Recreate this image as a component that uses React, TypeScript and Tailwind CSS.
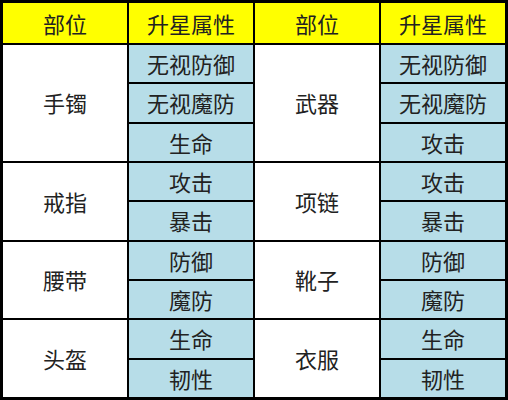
import React from "react";

type Group = { part: string; attrs: string[] };

const left: Group[] = [
  { part: "手镯", attrs: ["无视防御", "无视魔防", "生命"] },
  { part: "戒指", attrs: ["攻击", "暴击"] },
  { part: "腰带", attrs: ["防御", "魔防"] },
  { part: "头盔", attrs: ["生命", "韧性"] },
];

const right: Group[] = [
  { part: "武器", attrs: ["无视防御", "无视魔防", "攻击"] },
  { part: "项链", attrs: ["攻击", "暴击"] },
  { part: "靴子", attrs: ["防御", "魔防"] },
  { part: "衣服", attrs: ["生命", "韧性"] },
];

const spanClass: Record<number, string> = {
  2: "row-span-2",
  3: "row-span-3",
};

const cell = "flex items-center justify-center";

const App = () => {
  return (
    <div
      className="w-[508px] h-[400px] border-[3px] border-black bg-black grid grid-cols-4 grid-rows-[40px_repeat(9,1fr)] gap-[2px] text-[22px] text-[#222]"
      style={{ fontFamily: '"Noto Sans CJK SC", "Noto Sans", sans-serif' }}
    >
      {/* Header */}
      <div className={`${cell} bg-[#ffff00]`}>部位</div>
      <div className={`${cell} bg-[#ffff00]`}>升星属性</div>
      <div className={`${cell} bg-[#ffff00]`}>部位</div>
      <div className={`${cell} bg-[#ffff00]`}>升星属性</div>

      {/* Body */}
      {left.map((g, i) => {
        const r = right[i];
        return (
          <React.Fragment key={g.part}>
            {g.attrs.map((a, j) => (
              <React.Fragment key={j}>
                {j === 0 && (
                  <div className={`${cell} bg-white ${spanClass[g.attrs.length]}`}>
                    {g.part}
                  </div>
                )}
                <div className={`${cell} bg-[#b7dde8]`}>{a}</div>
                {j === 0 && (
                  <div className={`${cell} bg-white ${spanClass[r.attrs.length]}`}>
                    {r.part}
                  </div>
                )}
                <div className={`${cell} bg-[#b7dde8]`}>{r.attrs[j]}</div>
              </React.Fragment>
            ))}
          </React.Fragment>
        );
      })}
    </div>
  );
};

export default App;
